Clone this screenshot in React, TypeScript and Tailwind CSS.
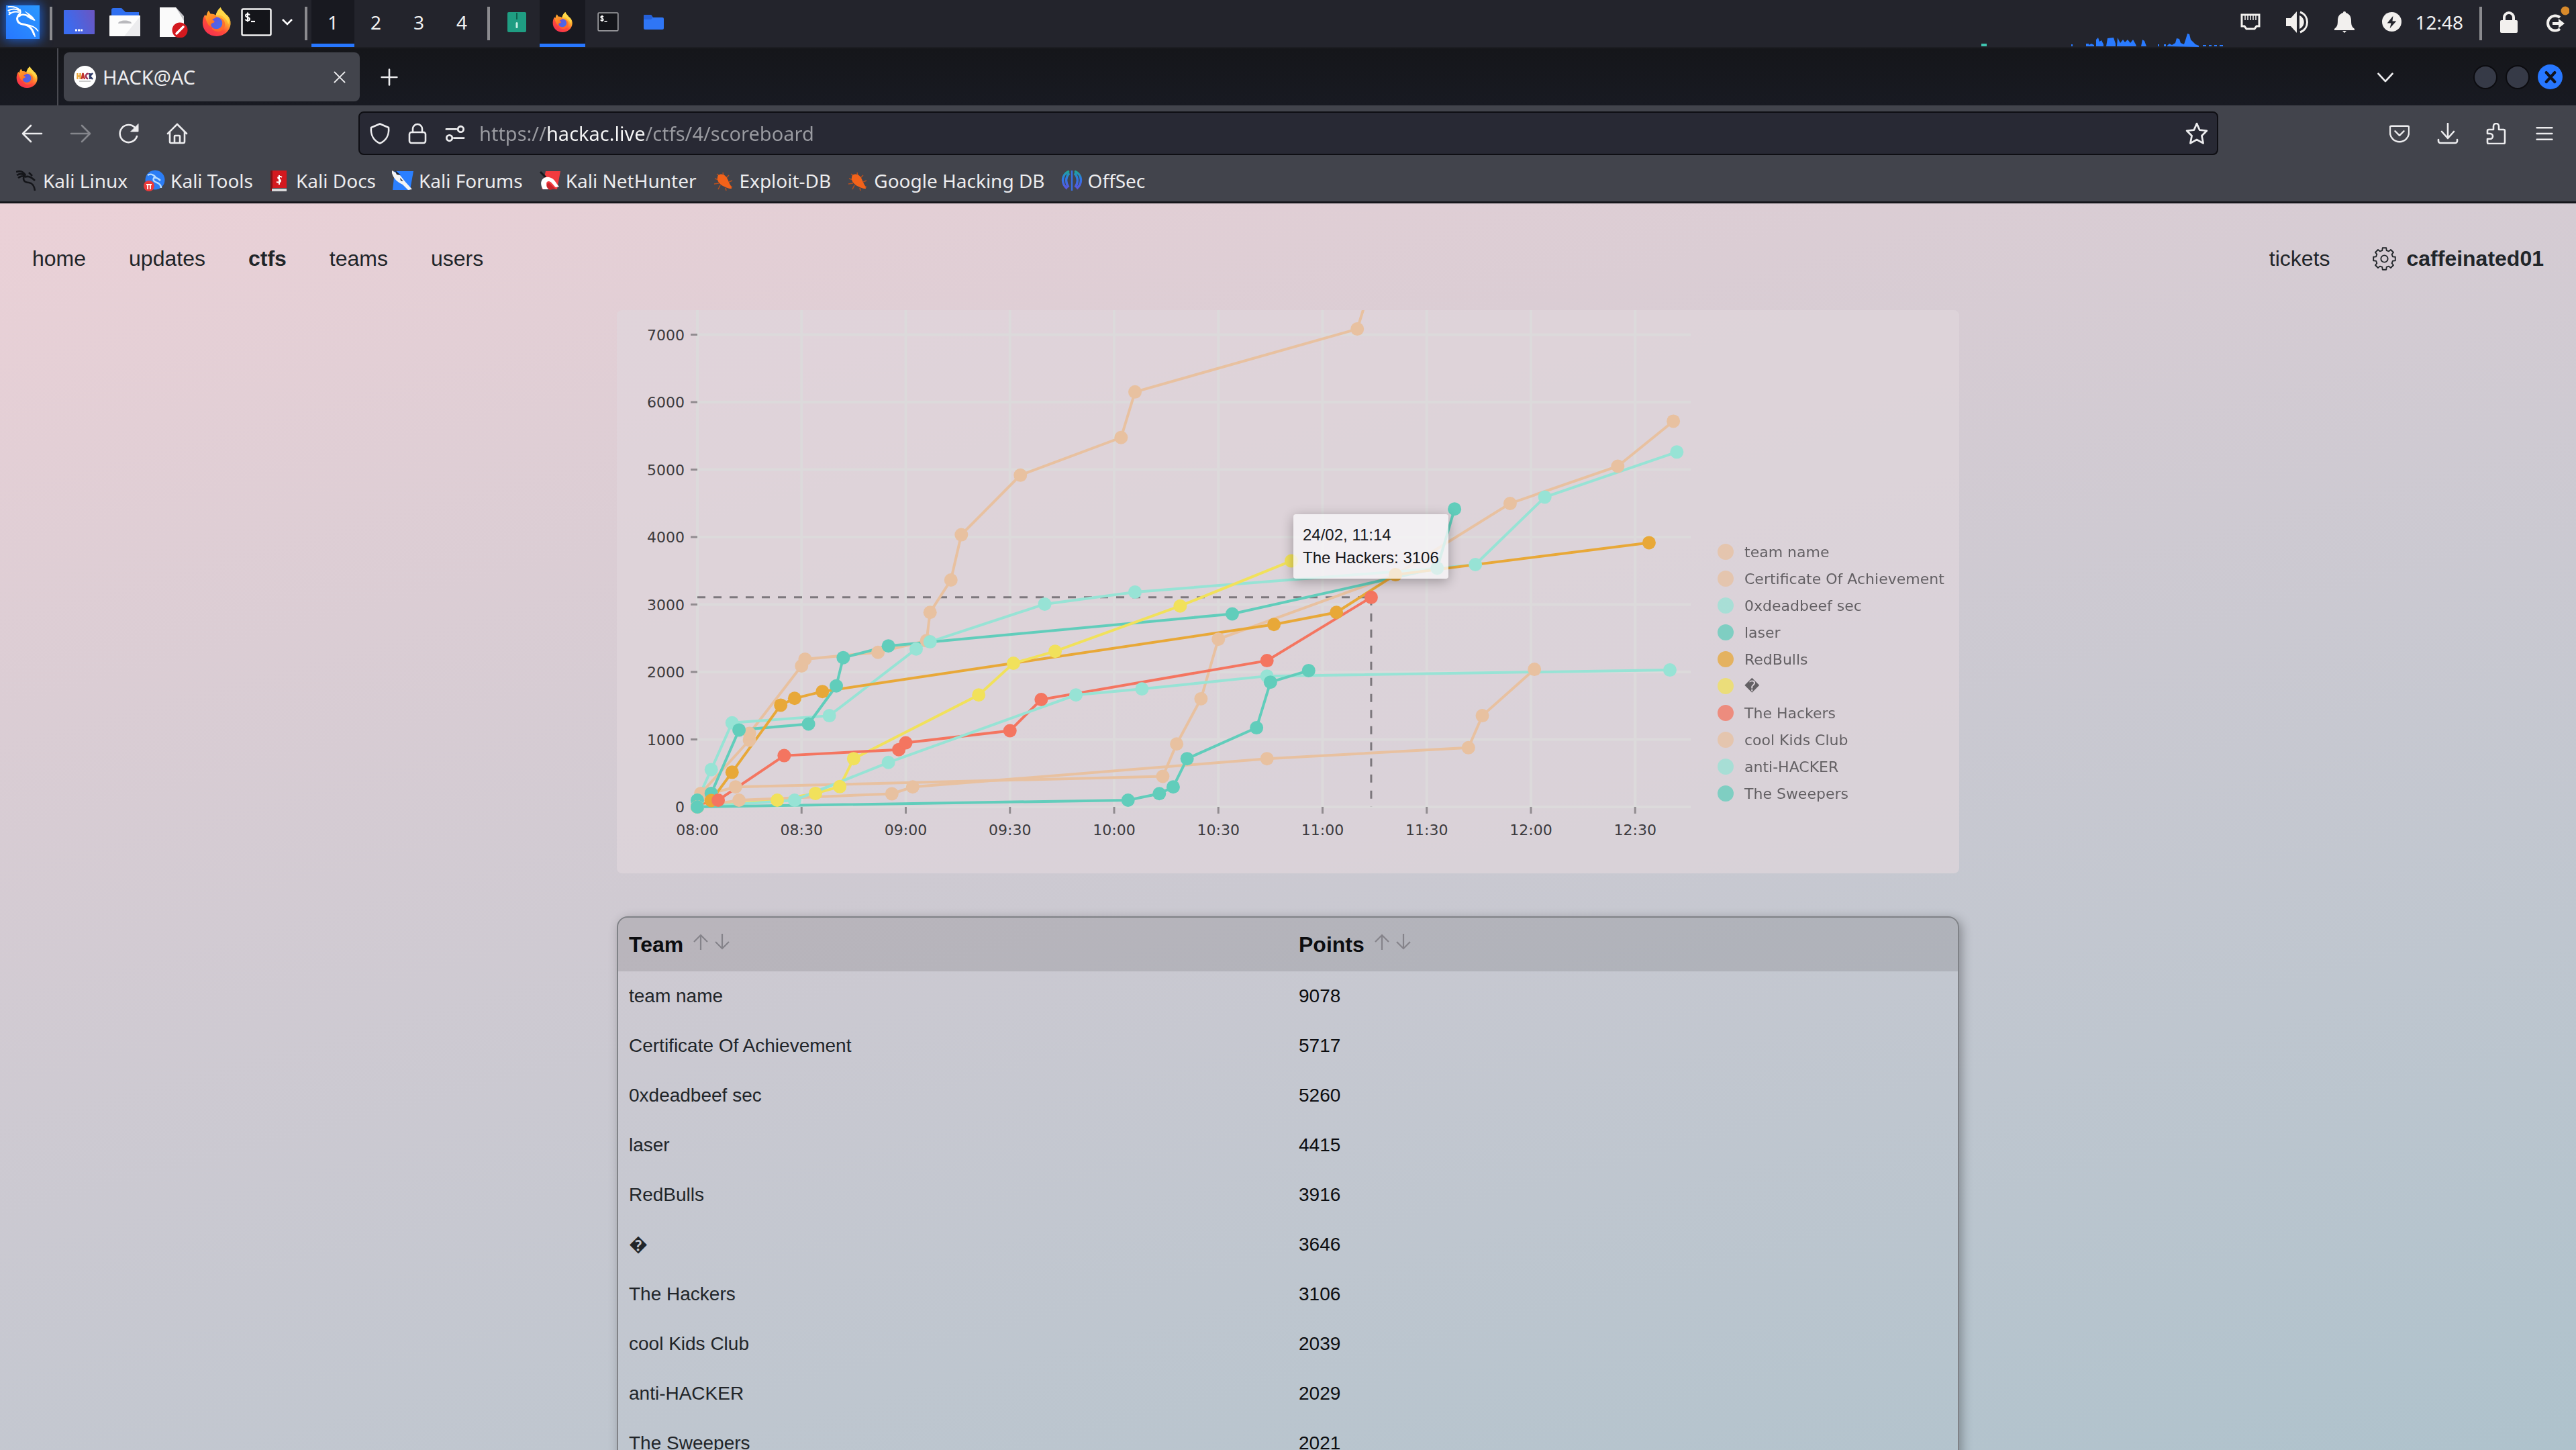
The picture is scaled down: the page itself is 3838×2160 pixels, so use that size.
import React from 'react';
import type { ReactNode } from 'react';

const UI_FONT = "font-['Noto_Sans',sans-serif]";

/* ---------- icons ---------- */

function KaliLogo() {
  return (
    <svg viewBox="0 0 150 150" className="size-[50px] shadow-[0_0_16px_2px_#1d5fd0]" fill="none" stroke="white">
      <defs>
        <linearGradient id="kali" x1="0" y1="1" x2="1" y2="0">
          <stop offset="0" stopColor="#2777ff" />
          <stop offset="1" stopColor="#2a98ff" />
        </linearGradient>
      </defs>
      <rect width="150" height="150" fill="url(#kali)" stroke="none" />
      <path d="M8 7C28 5 50 8 62 22M8 24C24 16 44 14 60 24M12 42C24 30 42 26 58 30M24 36L12 30" strokeWidth="6" />
      <path d="M60 18C66 28 66 34 56 44C44 60 50 80 74 84C100 88 116 98 126 132" strokeWidth="9" />
      <path d="M58 50C66 38 84 40 100 48L128 66" strokeWidth="8" />
      <path d="M84 26L104 38L120 52L130 68L112 62L92 50L104 48Z" fill="white" strokeWidth="1" />
      <path d="M84 86C110 88 132 96 144 116M126 128L130 140" strokeWidth="5" />
    </svg>
  );
}

function FirefoxIcon({ className, id }: { className: string; id: string }) {
  return (
    <svg viewBox="0 0 48 48" className={className}>
      <defs>
        <linearGradient id={id + 'b'} x1="0.85" y1="0.1" x2="0.3" y2="1">
          <stop offset="0" stopColor="#ffe24a" />
          <stop offset="0.35" stopColor="#ffab2e" />
          <stop offset="0.65" stopColor="#ff4b3a" />
          <stop offset="1" stopColor="#f5304f" />
        </linearGradient>
        <linearGradient id={id + 'f'} x1="0" y1="0" x2="0.4" y2="1">
          <stop offset="0" stopColor="#ffb02e" />
          <stop offset="1" stopColor="#ff6a22" />
        </linearGradient>
        <linearGradient id={id + 'g'} x1="0" y1="0" x2="1" y2="1">
          <stop offset="0" stopColor="#6d4fd8" />
          <stop offset="1" stopColor="#3f72ee" />
        </linearGradient>
      </defs>
      <path fill={`url(#${id}b)`} d="M31 0C32 5 37 7 39 11L42 13C46 17 48 22 47.500 28C46.500 39 37 48 24.500 48C11 48 1 38.500 1 25.500C1 20 2.500 15.500 5 12L7 15C8 11 9 8 11 5.500L14 11C17 10.500 20 11 23 13C24 8 27 3 31 0Z" />
      <path fill="#ffd94a" d="M31 0C32 5 37 7 39 11C44 16 46 21 44 28C42 22 38 17 33 14C29 12 26 14 23 13C24 8 27 3 31 0Z" opacity="0.85" />
      <circle cx="24" cy="26" r="10" fill={`url(#${id}g)`} />
      <path fill={`url(#${id}f)`} d="M5 12L7 15C8 11 9 8 11 5.500L14 11C18 10.500 21 12 24 15C24 18 18 18 17 21C20 22 22 23 20 25C16 26 13 28 16 33C10 31 6 22 5 12Z" />
      <path fill="#ff6a2a" d="M16 33C20 37 28 37 32 32C36 27 33 20 29 17C35 18 39 23 38 30C37 37 31 41 24 40C19 39 16 36 16 33Z" opacity="0.8" />
    </svg>
  );
}

function DesktopIcon() {
  return (
    <svg viewBox="0 0 46 36" className="h-[36px] w-[46px]">
      <defs>
        <linearGradient id="desk" x1="0" y1="0.3" x2="1" y2="0">
          <stop offset="0" stopColor="#3a6cf0" />
          <stop offset="1" stopColor="#6c55c0" />
        </linearGradient>
      </defs>
      <rect width="46" height="36" rx="1" fill="url(#desk)" />
      <path d="M17 30h3M21 30h3M25 30h3" stroke="white" strokeWidth="3" />
    </svg>
  );
}

function FilesIcon() {
  return (
    <svg viewBox="0 0 46 42" className="h-[42px] w-[46px]">
      <path d="M3 12V3a3 3 0 0 1 3-3h12l6 6h20v6z" fill="#2f6ff0" />
      <rect y="11" width="46" height="31" rx="1" fill="#fcfcfc" />
      <path d="M46 12v30H22z" fill="#ececee" />
      <path d="M13 23c0-6 20-6 20 0z" fill="#b9b9bd" />
    </svg>
  );
}

function EditorIcon() {
  return (
    <svg viewBox="0 0 44 46" className="h-[46px] w-[44px] translate-x-1">
      <path d="M2 1h24l12 14v30H2z" fill="#fafafa" />
      <path d="M26 1l12 20V14z" fill="#c4c4c8" />
      <circle cx="32" cy="35" r="11.500" fill="#d3191f" />
      <path d="M27 40l10-10" stroke="white" strokeWidth="3.500" strokeLinecap="round" />
    </svg>
  );
}

function TerminalIcon({ className, stroke }: { className: string; stroke: string }) {
  return (
    <svg viewBox="0 0 46 42" className={className}>
      <rect x="1.500" y="1.500" width="43" height="39" rx="2" fill="#14151a" stroke={stroke} strokeWidth="2.500" />
      <path d="M13 10.500c-1-2-6-2-6 .7 0 3 6 2 6 5 0 3-5.500 3-6.500.6M10 6.500v14" fill="none" stroke="white" strokeWidth="2" />
      <path d="M15 20h6" stroke="white" strokeWidth="2.200" />
    </svg>
  );
}

function ArchiveIcon() {
  return (
    <svg viewBox="0 0 28 30" className="h-[30px] w-[28px]">
      <rect width="28" height="30" rx="2" fill="#1f9d82" />
      <path d="M14 1v10" stroke="#0f5f4e" strokeWidth="2" />
      <rect x="12.500" y="15" width="3" height="9" rx="1.500" fill="#c9efe4" />
    </svg>
  );
}

function FolderIcon() {
  return (
    <svg viewBox="0 0 30 22" className="h-[22px] w-[30px]">
      <path d="M0 2a2 2 0 0 1 2-2h9l3 4h14a2 2 0 0 1 2 2v14a2 2 0 0 1-2 2H2a2 2 0 0 1-2-2z" fill="#2f76f5" />
      <path d="M0 2a2 2 0 0 1 2-2h9l3 4-3 3H0z" fill="#2560d8" />
    </svg>
  );
}

type IconProps = { children: ReactNode; className?: string; width?: number };

/* 32x32 outline icon used in the browser chrome */
function Line({ children, className = 'size-8', width = 2.6 }: IconProps) {
  return (
    <svg viewBox="0 0 32 32" className={className} fill="none" stroke="currentColor" strokeWidth={width} strokeLinecap="round" strokeLinejoin="round">
      {children}
    </svg>
  );
}

function GearIcon() {
  const teeth = 8;
  let d = '';
  for (let i = 0; i < teeth; i++) {
    const mid = (i * 2 * Math.PI) / teeth - Math.PI / 2;
    const pts: [number, number][] = [
      [-0.25, 12.5],
      [-0.17, 16],
      [0.17, 16],
      [0.25, 12.5],
    ];
    pts.forEach(([a, r], j) => {
      const x = (17 + r * Math.cos(mid + a)).toFixed(1);
      const y = (17 + r * Math.sin(mid + a)).toFixed(1);
      d += `${i === 0 && j === 0 ? 'M' : 'L'}${x} ${y}`;
    });
  }
  return (
    <svg viewBox="0 0 34 34" className="size-[35px]" fill="none" stroke="currentColor" strokeWidth="1.800" strokeLinejoin="round">
      <path d={d + 'Z'} />
      <circle cx="17" cy="17" r="5" />
    </svg>
  );
}

/* ---------- desktop panel ---------- */

function Separator({ className = 'mx-[6px]' }: { className?: string }) {
  return <span className={`h-[50px] w-1 shrink-0 bg-[#8b8b8f] ${className}`} />;
}

function PanelButton({ label, width = 'w-[68px]', active = false, children }: { label: string; width?: string; active?: boolean; children: ReactNode }) {
  return (
    <button
      aria-label={label}
      className={`flex h-full shrink-0 items-center justify-center border-b-[5px] ${width} ${active ? 'border-[#2777ff] bg-[#181920]' : 'border-transparent'}`}
    >
      {children}
    </button>
  );
}

function NetGraph() {
  return (
    <svg viewBox="0 0 368 70" className="h-[70px] w-[368px] shrink-0" fill="#2a7bff">
      <rect x="2" y="65" width="8" height="4" fill="#3fc5b0" />
      <path d="M136 69v-3h2v3zM158 69v-4h4v2l4-2 4 2v2zM173 69v-10l3-3 2 6 3-2 3 6v3zM188 69l2-12 9-1 3 9v4zM204 69l1-13 4 8 4-5 3 4 4-4 4 5 4-5 4 7 1 3zM240 69l2-10 3 2 3 8zM265 69v-3h2v3zM274 69v-3h3v3zM278 69l4-4 4 2 5-3 2-7 4 1 2 6 5 2 3-9 2-7 3 1 2 8 3 3 4 4 5 2v2zM332 69v-2h5v2zM341 69v-2h4v2zM349 69v-2h4v2zM357 69v-2h5v2z" />
    </svg>
  );
}

function Panel() {
  return (
    <div className={`flex h-[70px] shrink-0 items-center bg-[#23242c] text-[28px] text-[#f0f0f0] ${UI_FONT}`}>
      <PanelButton label="Applications"><KaliLogo /></PanelButton>
      <Separator />
      <PanelButton label="Show desktop"><DesktopIcon /></PanelButton>
      <PanelButton label="Files"><FilesIcon /></PanelButton>
      <PanelButton label="Text editor"><EditorIcon /></PanelButton>
      <PanelButton label="Firefox"><FirefoxIcon id="p" className="h-[45px] w-[43px]" /></PanelButton>
      <PanelButton label="Terminal" width="w-[52px]"><TerminalIcon stroke="#f2f2f2" className="h-[42px] w-[46px]" /></PanelButton>
      <PanelButton label="More" width="w-[40px]">
        <svg viewBox="0 0 16 10" className="h-[10px] w-[16px]" fill="none" stroke="white" strokeWidth="2.600"><path d="M1 1l7 7 7-7" /></svg>
      </PanelButton>
      <Separator />
      {['1', '2', '3', '4'].map((n) => (
        <PanelButton key={n} label={`Workspace ${n}`} width="w-[64px]" active={n === '1'}>{n}</PanelButton>
      ))}
      <Separator />
      <PanelButton label="Archive"><ArchiveIcon /></PanelButton>
      <PanelButton label="HACK@AC" active><FirefoxIcon id="t" className="h-[30px] w-[30px]" /></PanelButton>
      <PanelButton label="Shell"><TerminalIcon stroke="#9a9a9e" className="h-[29px] w-[32px]" /></PanelButton>
      <PanelButton label="Folder"><FolderIcon /></PanelButton>
      <div className="flex-1" />
      <NetGraph />
      <PanelButton label="Network" width="w-[70px]">
        <svg viewBox="0 0 30 26" className="h-[26px] w-[30px]" fill="none" stroke="#f2f0ee" strokeWidth="3">
          <path d="M2 2h26v17h-4l-3 4H9l-3-4H2z" /><path d="M7 3v7M11 3v7M15 3v7M19 3v7M23 3v7" strokeWidth="1.500" />
        </svg>
      </PanelButton>
      <PanelButton label="Volume" width="w-[70px]">
        <svg viewBox="0 0 36 34" className="h-[34px] w-[36px]" fill="#f2f0ee">
          <path d="M1 11h7l9-10v32l-9-10H1zM21 7c9 4 9 16 0 20z" /><path d="M22 2c14 5 14 25 0 30" fill="none" stroke="#f2f0ee" strokeWidth="3" />
        </svg>
      </PanelButton>
      <PanelButton label="Notifications" width="w-[70px]">
        <svg viewBox="0 0 30 32" className="h-[32px] w-[30px]" fill="#f2f0ee">
          <path d="M15 0c2 0 2 1 2 2 6 2 8 6 8 12 0 6 1 9 5 12v2H0v-2c4-3 5-6 5-12 0-6 2-10 8-12 0-1 0-2 2-2zM12 29h6l-3 3z" />
        </svg>
      </PanelButton>
      <PanelButton label="Power" width="w-[70px]">
        <svg viewBox="0 0 30 30" className="size-[29px]"><circle cx="15" cy="15" r="15" fill="#f2f0ee" /><path d="M17 6L8 17h6l-2 8 10-11h-6z" fill="#23242c" /></svg>
      </PanelButton>
      <time className="pb-[4px]">12:48</time>
      <Separator className="ml-6" />
      <PanelButton label="Lock" width="w-20">
        <svg viewBox="0 0 26 32" className="h-[32px] w-[26px]"><rect y="13" width="26" height="19" rx="2" fill="#f2f0ee" /><path d="M6 14V9a7 7 0 0 1 14 0v5" fill="none" stroke="#f2f0ee" strokeWidth="4" /></svg>
      </PanelButton>
      <PanelButton label="Log out" width="w-[60px]">
        <svg viewBox="0 0 40 48" className="h-[48px] w-[40px]" fill="none" stroke="#f2f0ee" strokeWidth="4">
          <path d="M26 17a11 11 0 1 0 0 17M15 26h10" /><path d="M24 19l9 7-9 7z" fill="#f2f0ee" stroke="none" /><circle cx="34" cy="7" r="6.500" fill="#d98a2b" stroke="none" />
        </svg>
      </PanelButton>
    </div>
  );
}

/* ---------- browser chrome ---------- */

function TabBar() {
  return (
    <div className={`flex h-[87px] shrink-0 items-center border-t-2 border-[#1c1d22] bg-linear-to-b from-[#15161a] to-[#181a22] text-[#ececee] ${UI_FONT}`}>
      <button aria-label="Firefox View" className="flex h-full w-[87px] items-center justify-center border-r-2 border-[#4a4b52] pr-[5px]">
        <FirefoxIcon id="v" className="size-[32px]" />
      </button>
      <div className="ml-[8px] flex h-[73px] w-[441px] items-center rounded-lg bg-[#42444c] pr-[20px] pl-[15px] text-[29px]">
        <svg viewBox="0 0 33 33" className="mr-[10px] size-[33px]">
          <circle cx="16.500" cy="16.500" r="16.500" fill="white" />
          <g fill="none" strokeWidth="2.400">
            <path d="M5.500 11v9M9.500 11v9M5.500 15.500h4" stroke="#e9a53a" />
            <path d="M11.500 20l2-9 2.500 9M12 17h4" stroke="#c3352c" />
            <path d="M22 12.500c-4-3-6 5-1 7" stroke="#a02d55" />
            <path d="M24 11v9M28 11l-4 4.500 4 4.500" stroke="#2d3a66" />
          </g>
          <path d="M8 23h17" stroke="#999" />
        </svg>
        <span className="flex-1">HACK@AC</span>
        <button aria-label="Close tab"><Line className="size-[20px]" width={3}><path d="M4 4l24 24M28 4L4 28" /></Line></button>
      </div>
      <button aria-label="New tab" className="flex w-[88px] items-center justify-center"><Line className="size-[28px]" width={3}><path d="M16 3v26M3 16h26" /></Line></button>
      <div className="flex-1" />
      <button aria-label="List all tabs" className="mr-[117px]"><Line className="size-[28px]" width={3}><path d="M4 10l12 13 12-13" /></Line></button>
      <div className="mr-[20px] flex items-center gap-[12px]">
        <button aria-label="Minimize" className="size-[36px] rounded-full border-2 border-[#0c0c10] bg-[#363a47]" />
        <button aria-label="Maximize" className="size-[36px] rounded-full border-2 border-[#0c0c10] bg-[#363a47]" />
        <button aria-label="Close" className="flex size-[37px] items-center justify-center rounded-full bg-[#2777ff] text-[#10131c]">
          <Line className="size-[20px]" width={7}><path d="M6 5l20 22M26 5L6 27" /></Line>
        </button>
      </div>
    </div>
  );
}

function ToolButton({ label, children, className = 'w-[72px]' }: { label: string; children: ReactNode; className?: string }) {
  return <button aria-label={label} className={`flex h-full shrink-0 items-center justify-center ${className}`}>{children}</button>;
}

function NavBar() {
  return (
    <div className="flex h-[83px] shrink-0 items-center pr-[11px] pl-[12px]">
      <ToolButton label="Back"><Line><path d="M30 16H3M14 4L2 16l12 12" /></Line></ToolButton>
      <ToolButton label="Forward" className="w-[72px] text-[#85868c]"><Line><path d="M2 16h27M18 4l12 12-12 12" /></Line></ToolButton>
      <ToolButton label="Reload"><Line><path d="M28 20a13 13 0 1 1-3-13" /><path d="M30 2v11H19z" fill="currentColor" strokeWidth="1" /></Line></ToolButton>
      <ToolButton label="Home"><Line><path d="M2 16L16 2l14 14M5 14v14a2 2 0 0 0 2 2h18a2 2 0 0 0 2-2V14M12 30V20a1 1 0 0 1 1-1h6a1 1 0 0 1 1 1v10" /></Line></ToolButton>
      <div className="mx-[234px] flex h-[65px] min-w-0 flex-1 items-center rounded-lg border-2 border-[#0e0e13] bg-[#282934]">
        <ToolButton label="Tracking protection" className="ml-[2px] w-[56px]"><Line><path d="M16 1.500L29 7c1 10-3 19-13 23.500C6 26 2 17 3 7z" /></Line></ToolButton>
        <ToolButton label="Site information" className="w-[56px]"><Line><rect x="4" y="14" width="24" height="16" rx="3" /><path d="M9 14V9a7 7 0 0 1 14 0v5" /></Line></ToolButton>
        <ToolButton label="Permissions" className="w-[56px]"><Line className="size-[30px]" width={3}><path d="M2 9h16M14 23h16" /><circle cx="25" cy="9" r="4.500" /><circle cx="7" cy="23" r="4.500" /></Line></ToolButton>
        <input
          aria-label="Address"
          defaultValue="https://hackac.live/ctfs/4/scoreboard"
          className="ml-[8px] min-w-0 flex-1 bg-[linear-gradient(to_right,#9a9ba1_99px,#f6f6f6_99px,#f6f6f6_248px,#9a9ba1_248px)] bg-clip-text text-[29px] leading-[56px] text-transparent outline-none"
        />
        <ToolButton label="Bookmark" className="w-[60px]">
          <Line className="size-[34px]"><path d="M16 2l4 9 10 1-7 7 2 10.500-9-5-9 5L9 19l-7-7 10-1z" /></Line>
        </ToolButton>
      </div>
      <ToolButton label="Pocket"><Line className="size-[30px]"><path d="M3 4h26a2 2 0 0 1 2 2v8a15 15 0 0 1-30 0V6a2 2 0 0 1 2-2zM9 12l7 7 7-7" /></Line></ToolButton>
      <ToolButton label="Downloads"><Line><path d="M16 1v21M7 13l9 10 9-10M2 25v2a3 3 0 0 0 3 3h22a3 3 0 0 0 3-3v-2" /></Line></ToolButton>
      <ToolButton label="Extensions"><Line><path d="M12 10V5a4 4 0 0 1 8 0v5h7a2 2 0 0 1 2 2v17a2 2 0 0 1-2 2H5a2 2 0 0 1-2-2v-5h4a4 4 0 0 0 0-8H3v-4a2 2 0 0 1 2-2z" /></Line></ToolButton>
      <ToolButton label="Menu"><Line className="size-[28px]" width={3}><path d="M3 6h26M3 16h26M3 26h26" /></Line></ToolButton>
    </div>
  );
}

const spider = (
  <>
    <path d="M6 6L10 9M3 13l6 2M2 21l7-1M8 29l3-6M15 4l1 5M24 8l-4 4M29 16l-5 2M29 26l-5-3M20 31l-1-4" stroke="#b5501f" strokeWidth="1.500" />
    <path d="M8 8c6-4 12 0 15 8 2 6 5 8 5 12-6 0-8-2-13-4C8 20 5 14 8 8z" fill="#f2621a" />
  </>
);

const bookmarks: { name: string; icon: ReactNode }[] = [
  {
    name: 'Kali Linux',
    icon: (
      <g fill="none" stroke="#15161a" strokeWidth="2.600">
        <path d="M0 3C6 1 11 3 14 8M1 8C6 5 10 6 13 8M3 12c4-3 7-3 10-3" /><path d="M14 7c-6 7-2 12 5 12 6 1 8 5 9 12" /><path d="M13 11c5-3 10 0 15 5M19 4l5 5" />
      </g>
    ),
  },
  {
    name: 'Kali Tools',
    icon: (
      <>
        <circle cx="17" cy="15" r="14.500" fill="#2b7df5" />
        <path d="M6 8c5-3 8-1 11 2-6 6 0 8 5 10 3 2 4 4 4 7M15 12c4-1 7 1 10 4" fill="none" stroke="#b8dcff" strokeWidth="2.500" />
        <circle cx="8" cy="24" r="8" fill="#ea3a3a" /><path d="M4 22h8M6 22v7M10 22v7" stroke="white" strokeWidth="1.800" />
      </>
    ),
  },
  {
    name: 'Kali Docs',
    icon: (
      <>
        <path d="M4 1h22v26H4z" fill="#d3191f" /><path d="M2 1h3v30H2z" fill="#7d1216" /><path d="M4 28h22v4H4z" fill="#d9d9da" />
        <path d="M19 11c-5-3-8 1-4 3s2 6-4 4M15 8v14" fill="none" stroke="white" strokeWidth="2" />
      </>
    ),
  },
  {
    name: 'Kali Forums',
    icon: (
      <>
        <path d="M4 2h28l-5 28H1z" fill="#2a7fff" /><path d="M0 1l12 7 8 10 10 11-6 1-8-8C8 18 3 14 0 5z" fill="#f5f5f5" /><path d="M4 0l9 8-6-1zM12 12l5 5-4-1z" fill="#20222a" />
      </>
    ),
  },
  {
    name: 'Kali NetHunter',
    icon: (
      <>
        <path d="M10 2h22l-5 27H4z" fill="#f33b3f" /><path d="M2 3l8 8" stroke="#17181d" strokeWidth="3" />
        <path d="M6 29C-1 18 6 9 15 11c9 2 10 9 15 14l-5 1c-4-3-6-9-11-9-5 1-3 8 2 12z" fill="white" />
        <path d="M13 20c4-2 6 5 12 8l-9 2c-5-3-6-8-3-10z" fill="#c9232a" />
      </>
    ),
  },
  { name: 'Exploit-DB', icon: spider },
  { name: 'Google Hacking DB', icon: spider },
  {
    name: 'OffSec',
    icon: (
      <g fill="none" strokeWidth="3.500">
        <path d="M12 2C0 7 0 21 9 28M12 5C6 12 7 20 11 26M20 2c12 5 12 19 3 26M20 5c6 7 5 15 1 21" stroke="url(#offsec)" /><path d="M16 1v30" stroke="#3a6fe0" strokeWidth="2.500" />
        <defs><linearGradient id="offsec" x1="0" y1="0" x2="0" y2="1"><stop offset="0" stopColor="#1fa596" /><stop offset="0.4" stopColor="#2b7be6" /><stop offset="1" stopColor="#5a55e0" /></linearGradient></defs>
      </g>
    ),
  },
];

function Bookmarks() {
  return (
    <nav aria-label="Bookmarks" className="flex h-[60px] shrink-0 items-center gap-[24px] pb-[2px] pl-[24px] text-[28px]">
      {bookmarks.map((b) => (
        <a key={b.name} href="#" className="flex items-center gap-[8px] whitespace-nowrap">
          <svg viewBox="0 0 32 32" className="size-[32px]">{b.icon}</svg>
          {b.name}
        </a>
      ))}
    </nav>
  );
}

/* ---------- scoreboard page ---------- */

const PEACH = '#e8c1a0';
const AQUA = '#97e3d5';
const TEAL = '#61cdbb';
const ORANGE = '#e8a838';
const YELLOW = '#f1e15b';
const RED = '#f47560';

type Team = { name: string; points: number; color: string; track: [number, number][] };

/* track: [minutes after 08:00, score] */
const teams: Team[] = [
  { name: 'team name', points: 9078, color: PEACH, track: [[0, 0], [1, 200], [15, 990], [15, 1090], [30, 2090], [31, 2190], [52, 2291], [66, 2464], [67, 2883], [73, 3363], [76, 4034], [93, 4917], [122, 5475], [126, 6151], [190, 7084], [193, 7583]] },
  { name: 'Certificate Of Achievement', points: 5717, color: PEACH, track: [[0, 0], [4, 200], [11, 296], [134, 453], [138, 933], [145, 1603], [150, 2486], [201, 3442], [234, 4498], [265, 5050], [281, 5717]] },
  { name: '0xdeadbeef sec', points: 5260, color: AQUA, track: [[0, 100], [4, 553], [10, 1246], [38, 1352], [63, 2341], [67, 2447], [100, 3006], [126, 3185], [213, 3536], [224, 3592], [244, 4592], [282, 5260]] },
  { name: 'laser', points: 4415, color: TEAL, track: [[0, 100], [4, 200], [12, 1140], [32, 1229], [40, 1793], [42, 2212], [55, 2386], [154, 2861], [213, 3540], [218, 4415]] },
  { name: 'RedBulls', points: 3916, color: ORANGE, track: [[0, 0], [4, 95], [10, 514], [24, 1508], [28, 1609], [36, 1710], [166, 2704], [184, 2883], [201, 3442], [274, 3916]] },
  { name: '\uFFFD', points: 3646, color: YELLOW, track: [[0, 0], [23, 100], [34, 200], [41, 300], [45, 715], [81, 1659], [91, 2129], [103, 2307], [139, 2978], [171, 3646]] },
  { name: 'The Hackers', points: 3106, color: RED, track: [[0, 0], [6, 100], [25, 760], [58, 849], [60, 950], [90, 1129], [99, 1592], [164, 2168], [194, 3106]] },
  { name: 'cool Kids Club', points: 2039, color: PEACH, track: [[0, 0], [12, 100], [56, 195], [62, 296], [164, 715], [222, 877], [226, 1352], [241, 2039]] },
  { name: 'anti-HACKER', points: 2029, color: AQUA, track: [[0, 0], [28, 100], [55, 659], [109, 1659], [128, 1749], [164, 1939], [280, 2029]] },
  { name: 'The Sweepers', points: 2021, color: TEAL, track: [[0, 0], [124, 100], [133, 196], [137, 296], [141, 715], [161, 1173], [165, 1849], [176, 2021]] },
];

const px = (min: number) => 120 + (min * 1480) / 286;
const py = (score: number) => 740 - score * 0.1005;

function Chart() {
  const times = ['08:00', '08:30', '09:00', '09:30', '10:00', '10:30', '11:00', '11:30', '12:00', '12:30'];
  return (
    <section aria-label="Score chart" className="relative rounded-lg bg-[#e0d6db]/70">
      <svg viewBox="0 0 2000 839" className="block h-auto w-full font-['DejaVu_Sans',sans-serif]">
        <g stroke="#dcdadb" strokeWidth="4">
          {times.map((t, i) => <path key={t} d={`M${px(i * 30)} 0V740`} />)}
          {[0, 1, 2, 3, 4, 5, 6, 7].map((k) => <path key={k} d={`M120 ${py(k * 1000)}H1600`} />)}
        </g>
        <g stroke="#918c90" strokeWidth="3">
          {times.map((t, i) => <path key={t} d={`M${px(i * 30)} 740v10`} />)}
          {[0, 1, 2, 3, 4, 5, 6, 7].map((k) => <path key={k} d={`M110 ${py(k * 1000)}h10`} />)}
        </g>
        <g fontSize="22" fill="#3c3a3d">
          {times.map((t, i) => <text key={t} x={px(i * 30)} y="782" textAnchor="middle">{t}</text>)}
          {[0, 1, 2, 3, 4, 5, 6, 7].map((k) => <text key={k} x="101" y={py(k * 1000) + 8} textAnchor="end">{k * 1000}</text>)}
        </g>
        <path d={`M120 ${py(3106)}H${px(194)}`} fill="none" stroke="#7d787d" strokeWidth="3" strokeDasharray="12 12" />
        <path d={`M${px(194)} ${py(3106)}V740`} fill="none" stroke="#7d787d" strokeWidth="3" strokeDasharray="12 12" />
        {teams.map((t) => (
          <path key={t.name} d={'M' + t.track.map(([m, s]) => `${px(m)} ${py(s)}`).join('L')} fill="none" stroke={t.color} strokeWidth="4" />
        ))}
        {teams.map((t) => t.track.map(([m, s], i) => <circle key={t.name + i} cx={px(m)} cy={py(s)} r="10" fill={t.color} />))}
        {teams.map((t, i) => (
          <g key={t.name} opacity="0.75" fontSize="22">
            <circle cx="1652" cy={360 + i * 40} r="12" fill={t.color} />
            <text x="1680" y={368 + i * 40} fill="#3c3a3d">{t.name}</text>
          </g>
        ))}
      </svg>
      <div role="tooltip" className="absolute top-[304px] left-[1008px] rounded-sm bg-[#f8f6f7]/80 p-[14px] text-2xl leading-[34px] text-[#15161a] shadow-[0_4px_18px_rgba(0,0,0,0.3)]">
        24/02, 11:14
        <br />
        The Hackers: 3106
      </div>
    </section>
  );
}

function SortHeader({ name }: { name: string }) {
  return (
    <th scope="col" className="w-1/2 p-4 text-left text-[32px] leading-[48px] font-bold text-[#0c0d10]">
      <button className="flex items-center gap-[14px]">
        {name}
        <svg viewBox="0 0 56 24" className="h-[24px] w-[56px] -translate-y-1" fill="none" stroke="#85838a" strokeWidth="2.200">
          <path d="M12 24V2M2 12L12 2l10 10M44 0v22M34 12l10 10 10-10" />
        </svg>
      </button>
    </th>
  );
}

function Scoreboard() {
  return (
    <div className="mt-[64px] overflow-hidden rounded-2xl border-2 border-[#808287] shadow-[4px_4px_16px_rgba(0,0,0,0.3)]">
      <table className="w-full table-fixed text-[28px] leading-[42px]">
        <thead className="bg-black/10">
          <tr>
            <SortHeader name="Team" />
            <SortHeader name="Points" />
          </tr>
        </thead>
        <tbody>
          {teams.map((t) => (
            <tr key={t.name}>
              <td className="p-4 text-[#212529]">{t.name}</td>
              <td className="p-4 text-[#0c0d10]">{t.points}</td>
            </tr>
          ))}
        </tbody>
      </table>
    </div>
  );
}

function SiteNav() {
  return (
    <nav aria-label="Site" className="flex gap-[64px] px-[48px] pt-[58px] pb-[53px] text-[32px] leading-[48px] text-[#212529]">
      {['home', 'updates', 'ctfs', 'teams', 'users'].map((l) => (
        <a key={l} href="#" className={l === 'ctfs' ? 'font-bold' : ''}>{l}</a>
      ))}
      <a href="#" className="ml-auto">tickets</a>
      <a href="#" className="flex items-center gap-[15px] font-bold"><GearIcon />caffeinated01</a>
    </nav>
  );
}

export default function App() {
  return (
    <div className="flex h-screen flex-col overflow-hidden">
      <Panel />
      <TabBar />
      <div className={`shrink-0 border-b-[3px] border-[#15161b] bg-[#42444c] text-[#ececee] ${UI_FONT}`}>
        <NavBar />
        <Bookmarks />
      </div>
      <main className="min-h-0 flex-1 overflow-hidden bg-[linear-gradient(165deg,#ebd1d7,#aec2cc)] font-['Liberation_Sans',sans-serif]">
        <SiteNav />
        <div className="mx-auto w-full max-w-[2000px]">
          <Chart />
          <Scoreboard />
        </div>
      </main>
    </div>
  );
}
